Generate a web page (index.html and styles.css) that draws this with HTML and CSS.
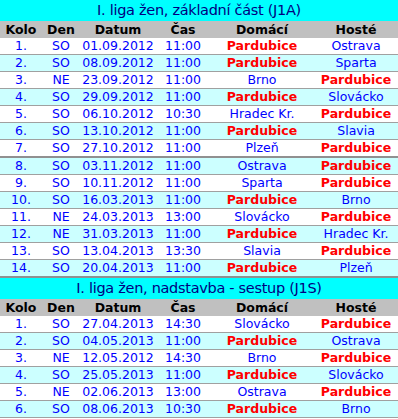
FILE: index.html
```html
<!DOCTYPE html>
<html lang="cs">
<head>
<meta charset="utf-8">
<title>Rozpis</title>
<link rel="stylesheet" href="styles.css">
</head>
<body>
<table class="rozpis">
<colgroup>
<col class="c-kolo"><col class="c-den"><col class="c-datum"><col class="c-cas"><col class="c-dom"><col class="c-host">
</colgroup>
<tr class="title"><td colspan="6">I. liga žen, základní část (J1A)</td></tr>
<tr class="head"><td>Kolo</td><td>Den</td><td>Datum</td><td>Čas</td><td>Domácí</td><td>Hosté</td></tr>
<tr class="odd"><td>1.</td><td>SO</td><td>01.09.2012</td><td>11:00</td><td class="home">Pardubice</td><td>Ostrava</td></tr>
<tr class="even"><td>2.</td><td>SO</td><td>08.09.2012</td><td>11:00</td><td class="home">Pardubice</td><td>Sparta</td></tr>
<tr class="odd"><td>3.</td><td>NE</td><td>23.09.2012</td><td>11:00</td><td>Brno</td><td class="home">Pardubice</td></tr>
<tr class="even"><td>4.</td><td>SO</td><td>29.09.2012</td><td>11:00</td><td class="home">Pardubice</td><td>Slovácko</td></tr>
<tr class="odd"><td>5.</td><td>SO</td><td>06.10.2012</td><td>10:30</td><td>Hradec Kr.</td><td class="home">Pardubice</td></tr>
<tr class="even"><td>6.</td><td>SO</td><td>13.10.2012</td><td>11:00</td><td class="home">Pardubice</td><td>Slavia</td></tr>
<tr class="odd split"><td>7.</td><td>SO</td><td>27.10.2012</td><td>11:00</td><td>Plzeň</td><td class="home">Pardubice</td></tr>
<tr class="even"><td>8.</td><td>SO</td><td>03.11.2012</td><td>11:00</td><td>Ostrava</td><td class="home">Pardubice</td></tr>
<tr class="odd"><td>9.</td><td>SO</td><td>10.11.2012</td><td>11:00</td><td>Sparta</td><td class="home">Pardubice</td></tr>
<tr class="even"><td>10.</td><td>SO</td><td>16.03.2013</td><td>11:00</td><td class="home">Pardubice</td><td>Brno</td></tr>
<tr class="odd"><td>11.</td><td>NE</td><td>24.03.2013</td><td>13:00</td><td>Slovácko</td><td class="home">Pardubice</td></tr>
<tr class="even"><td>12.</td><td>NE</td><td>31.03.2013</td><td>11:00</td><td class="home">Pardubice</td><td>Hradec Kr.</td></tr>
<tr class="odd"><td>13.</td><td>SO</td><td>13.04.2013</td><td>13:30</td><td>Slavia</td><td class="home">Pardubice</td></tr>
<tr class="even split"><td>14.</td><td>SO</td><td>20.04.2013</td><td>11:00</td><td class="home">Pardubice</td><td>Plzeň</td></tr>
<tr class="title"><td colspan="6">I. liga žen, nadstavba - sestup (J1S)</td></tr>
<tr class="head"><td>Kolo</td><td>Den</td><td>Datum</td><td>Čas</td><td>Domácí</td><td>Hosté</td></tr>
<tr class="odd"><td>1.</td><td>SO</td><td>27.04.2013</td><td>14:30</td><td>Slovácko</td><td class="home">Pardubice</td></tr>
<tr class="even"><td>2.</td><td>SO</td><td>04.05.2013</td><td>11:00</td><td class="home">Pardubice</td><td>Ostrava</td></tr>
<tr class="odd"><td>3.</td><td>NE</td><td>12.05.2012</td><td>14:30</td><td>Brno</td><td class="home">Pardubice</td></tr>
<tr class="even"><td>4.</td><td>SO</td><td>25.05.2013</td><td>11:00</td><td class="home">Pardubice</td><td>Slovácko</td></tr>
<tr class="odd"><td>5.</td><td>NE</td><td>02.06.2013</td><td>13:00</td><td>Ostrava</td><td class="home">Pardubice</td></tr>
<tr class="even"><td>6.</td><td>SO</td><td>08.06.2013</td><td>10:30</td><td class="home">Pardubice</td><td>Brno</td></tr>
</table>
</body>
</html>
```
FILE: styles.css
```css
html, body {
  margin: 0;
  padding: 0;
  background: #ffffff;
}
.rozpis {
  width: 398px;
  border-collapse: collapse;
  table-layout: fixed;
  font-family: "DejaVu Sans", Verdana, sans-serif;
  font-size: 12.5px;
  color: #0000ff;
}
.c-kolo { width: 42px; }
.c-den { width: 38px; }
.c-datum { width: 76px; }
.c-cas { width: 54px; }
.c-dom { width: 104px; }
.c-host { width: 84px; }
.rozpis td {
  padding: 0;
  text-align: center;
  white-space: nowrap;
  height: 16px;
  line-height: 16px;
  border-bottom: 1px solid #a0a0a0;
}
.title td {
  background: #00ffff;
  color: #000080;
  font-size: 14.5px;
  letter-spacing: -0.3px;
  height: 21px;
  line-height: 21px;
  border-bottom: 0;
}
.head td {
  background: #c0c0c0;
  color: #000000;
  font-weight: bold;
  height: 17px;
  line-height: 17px;
  border-bottom: 0;
}
.odd td { background: #ffffff; }
.even td { background: #ccffff; }
.split td { border-bottom: 2px solid #909090; }
.rozpis td.home {
  color: #ff0000;
  font-weight: bold;
}
```
